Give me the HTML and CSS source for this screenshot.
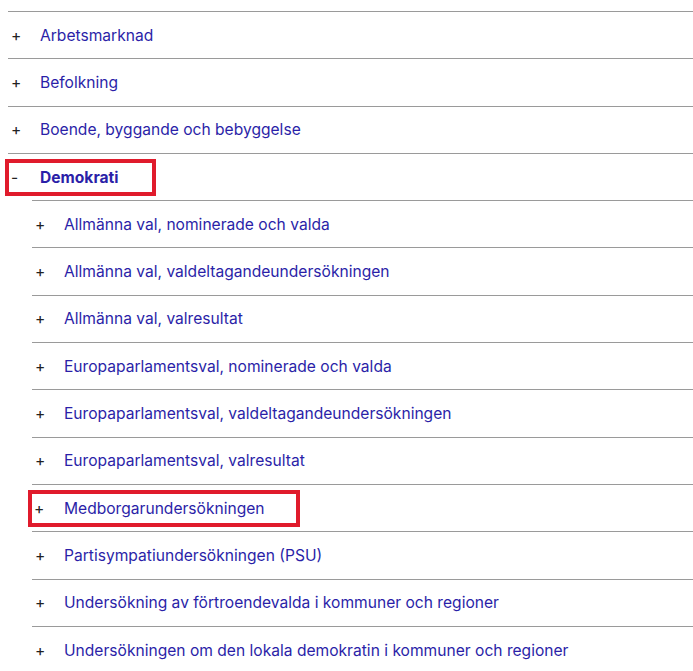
FILE: index.html
```html
<!DOCTYPE html>
<html lang="sv">
<head>
  <meta charset="UTF-8">
  <meta name="viewport" content="width=device-width, initial-scale=1.0">
  <title>Ämnen</title>
  <link rel="stylesheet" href="styles.css">
</head>
<body>
<ul class="tree">
  <li class="node"><a class="row" href="#"><span class="sign">+</span><span class="label">Arbetsmarknad</span></a></li>
  <li class="node"><a class="row" href="#"><span class="sign">+</span><span class="label">Befolkning</span></a></li>
  <li class="node"><a class="row" href="#"><span class="sign">+</span><span class="label">Boende, byggande och bebyggelse</span></a></li>
  <li class="node open">
    <a class="row" href="#"><span class="mark mark-top"><span class="sign">-</span><span class="label">Demokrati</span></span></a>
    <ul class="tree sub">
      <li class="node"><a class="row" href="#"><span class="sign">+</span><span class="label">Allmänna val, nominerade och valda</span></a></li>
      <li class="node"><a class="row" href="#"><span class="sign">+</span><span class="label">Allmänna val, valdeltagandeundersökningen</span></a></li>
      <li class="node"><a class="row" href="#"><span class="sign">+</span><span class="label">Allmänna val, valresultat</span></a></li>
      <li class="node"><a class="row" href="#"><span class="sign">+</span><span class="label">Europaparlamentsval, nominerade och valda</span></a></li>
      <li class="node"><a class="row" href="#"><span class="sign">+</span><span class="label">Europaparlamentsval, valdeltagandeundersökningen</span></a></li>
      <li class="node"><a class="row" href="#"><span class="sign">+</span><span class="label">Europaparlamentsval, valresultat</span></a></li>
      <li class="node"><a class="row" href="#"><span class="mark mark-sub"><span class="sign">+</span><span class="label">Medborgarundersökningen</span></span></a></li>
      <li class="node"><a class="row" href="#"><span class="sign">+</span><span class="label">Partisympatiundersökningen (PSU)</span></a></li>
      <li class="node"><a class="row" href="#"><span class="sign">+</span><span class="label">Undersökning av förtroendevalda i kommuner och regioner</span></a></li>
      <li class="node"><a class="row" href="#"><span class="sign">+</span><span class="label">Undersökningen om den lokala demokratin i kommuner och regioner</span></a></li>
    </ul>
  </li>
</ul>
</body>
</html>
```

FILE: styles.css
```css
body {
  margin: 0;
  padding: 11px 0 0 8px;
  background: #ffffff;
  font-family: Inter, "Liberation Sans", sans-serif;
  font-size: 15.6px;
  color: #2b1fa8;
  overflow: hidden;
}

.tree {
  list-style: none;
  margin: 0;
  padding: 0;
}

.tree.sub {
  padding-left: 24px;
}

.node {
  border-top: 1px solid #9a9a9a;
}

.row {
  display: flex;
  align-items: center;
  height: 46.3px;
  color: #2b1fa8;
  text-decoration: none;
}

.sign {
  width: 32px;
  padding-left: 3px;
  box-sizing: border-box;
  color: #222222;
}

.open > .row .label {
  font-weight: bold;
}

/* 赤枠（注釈） */
.mark {
  display: inline-flex;
  align-items: center;
  height: 37px;
  box-sizing: border-box;
  border: 4px solid #e01b2c;
  margin-left: -3px;
}

.mark .sign {
  padding-left: 2px;
  width: 31px;
}

.mark-top {
  width: 151px;
}

.mark-sub {
  width: 272px;
  margin-left: -4px;
}

.mark-sub .sign {
  width: 32px;
}
```
